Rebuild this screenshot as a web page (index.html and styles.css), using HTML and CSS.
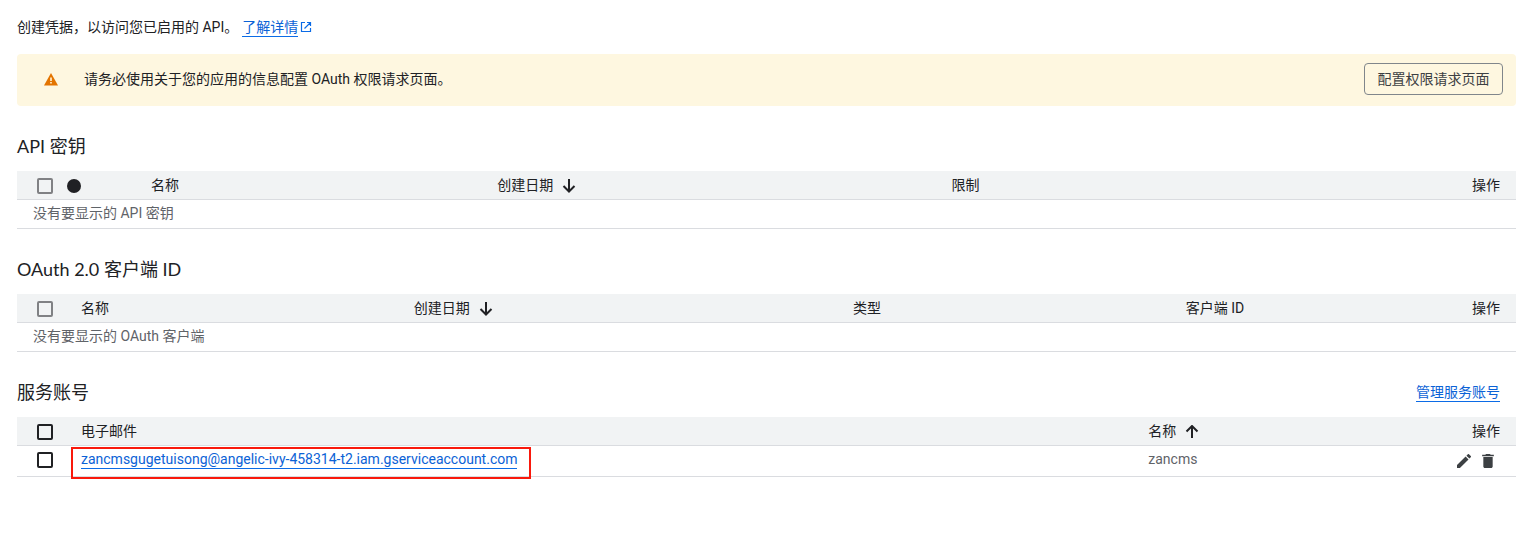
FILE: index.html
```html
<!DOCTYPE html>
<html lang="zh-CN">
<head>
    <meta charset="UTF-8">
    <meta name="viewport" content="width=device-width, initial-scale=1.0">
    <title>凭据</title>
    <link rel="stylesheet" href="styles.css">
</head>
<body>
  <main>
    <p class="intro">创建凭据，以访问您已启用的 API。
      <a class="link" href="#">了解详情</a><svg class="external" viewBox="0 0 12 12" width="12" height="12"><path d="M5 1.500H1.500v9h9V7M7 1.500h3.500V5M10.500 1.500L4.500 7.500" fill="none" stroke="currentColor" stroke-width="1.200"/></svg>
    </p>

    <div class="alert">
      <svg class="warning" viewBox="0 0 14 13" width="14" height="13"><path d="M7 0L14 12.500H0z" fill="#e37400"/><path d="M6 4.500h2v3.500H6zM6 9h2v1.500H6z" fill="#fbdcae"/></svg>
      <p class="alert-text">请务必使用关于您的应用的信息配置 OAuth 权限请求页面。</p>
      <button class="alert-btn" type="button">配置权限请求页面</button>
    </div>

    <section>
      <div class="section-head">
        <h2>API 密钥</h2>
      </div>
      <table>
        <colgroup>
          <col class="col-check">
          <col class="col-status">
          <col class="col-key-name">
          <col class="col-key-date">
          <col>
          <col class="col-actions">
        </colgroup>
        <thead>
          <tr>
            <th class="check"><input type="checkbox" aria-label="选择所有 API 密钥" disabled></th>
            <th class="status"><span class="dot"></span></th>
            <th>名称</th>
            <th><span class="sort">创建日期 <svg viewBox="0 0 14 14" width="14" height="14"><path d="M7 0v12M1.500 7L7 12.500 12.500 7" fill="none" stroke="currentColor" stroke-width="2"/></svg></span></th>
            <th>限制</th>
            <th class="actions">操作</th>
          </tr>
        </thead>
        <tbody>
          <tr>
            <td colspan="6">没有要显示的 API 密钥</td>
          </tr>
        </tbody>
      </table>
    </section>

    <section>
      <div class="section-head">
        <h2>OAuth 2.0 客户端 ID</h2>
      </div>
      <table>
        <colgroup>
          <col class="col-check">
          <col class="col-client">
          <col class="col-client-date">
          <col class="col-client">
          <col>
          <col class="col-actions">
        </colgroup>
        <thead>
          <tr>
            <th class="check"><input type="checkbox" aria-label="选择所有客户端" disabled></th>
            <th>名称</th>
            <th><span class="sort">创建日期 <svg viewBox="0 0 14 14" width="14" height="14"><path d="M7 0v12M1.500 7L7 12.500 12.500 7" fill="none" stroke="currentColor" stroke-width="2"/></svg></span></th>
            <th>类型</th>
            <th>客户端 ID</th>
            <th class="actions">操作</th>
          </tr>
        </thead>
        <tbody>
          <tr>
            <td colspan="6">没有要显示的 OAuth 客户端</td>
          </tr>
        </tbody>
      </table>
    </section>

    <section>
      <div class="section-head">
        <h2>服务账号</h2>
        <a class="link" href="#">管理服务账号</a>
      </div>
      <table>
        <colgroup>
          <col class="col-check">
          <col class="col-email">
          <col>
          <col class="col-actions">
        </colgroup>
        <thead>
          <tr>
            <th class="check"><input type="checkbox" aria-label="选择所有服务账号"></th>
            <th>电子邮件</th>
            <th><span class="sort">名称 <svg viewBox="0 0 14 14" width="14" height="14"><path d="M7 13V1.500M1.500 6.500L7 1l5.500 5.500" fill="none" stroke="currentColor" stroke-width="2"/></svg></span></th>
            <th class="actions">操作</th>
          </tr>
        </thead>
        <tbody>
          <tr class="account">
            <td class="check"><input type="checkbox" aria-label="选择 zancms"></td>
            <td><span class="marked"><a class="link" href="#">zancmsgugetuisong@angelic-ivy-458314-t2.iam.gserviceaccount.com</a></span></td>
            <td>zancms</td>
            <td class="actions">
              <div class="tools">
                <button type="button" aria-label="修改"><svg viewBox="3 3 18 18" width="14" height="14"><path d="M3 17.250V21h3.750L17.810 9.940l-3.750-3.750zM20.710 7.040a1 1 0 0 0 0-1.410l-2.340-2.340a1 1 0 0 0-1.410 0l-1.830 1.830 3.750 3.750z"/></svg></button>
                <button type="button" aria-label="删除"><svg viewBox="3 3 18 18" width="14" height="14"><path d="M6 19c0 1.100.9 2 2 2h8c1.100 0 2-.9 2-2V7H6zM19.500 4h-4l-1-1h-5l-1 1h-4v2h15z"/></svg></button>
              </div>
            </td>
          </tr>
        </tbody>
      </table>
    </section>
  </main>
</body>
</html>
```
FILE: styles.css
```css
*{
    margin: 0;
    padding: 0;
    box-sizing: border-box;
}
body{
    background-color: #fff;
    color: #202124;
    font-family: Roboto, "Noto Sans CJK SC", sans-serif;
    font-size: 14px;
    line-height: 20px;
}
main{
    padding: 17px 12px 17px 17px;
}
.link{
    display: inline-block;
    line-height: 18px;
    color: #0b62d6;
    text-decoration: none;
    border-bottom: 1px solid #0b6be6;
}
.intro{
    display: flex;
    align-items: center;
    height: 20px;
}
.intro .link{
    margin-left: 4px;
}
.external{
    margin-left: 2px;
    color: #0b6be6;
}
.alert{
    display: flex;
    align-items: center;
    margin-top: 17px;
    padding: 9px 13px 11px 27px;
    background-color: #fef7e0;
    border-radius: 4px;
}
.alert-text{
    flex: 1;
    margin-left: 26px;
}
.alert-btn{
    min-width: 139px;
    height: 32px;
    padding: 0 12px;
    font: inherit;
    color: #3c4043;
    background: none;
    border: 1px solid #80868b;
    border-radius: 4px;
}
section{
    margin-top: 28px;
}
.section-head{
    display: flex;
    justify-content: space-between;
    align-items: center;
    height: 24px;
    margin-bottom: 13px;
    padding-right: 16px;
}
.alert + section{
    margin-top: 28px;
}
h2{
    font-family: Lato, "Noto Sans CJK SC", sans-serif;
    font-size: 18px;
    font-weight: 400;
    line-height: 24px;
}
table{
    width: 100%;
    table-layout: fixed;
    border-collapse: separate;
    border-spacing: 0;
}
.col-check{
    width: 48px;
}
.col-status{
    width: 70px;
}
.col-key-name{
    width: 23.1%;
}
.col-key-date{
    width: 30.3%;
}
.col-client{
    width: 22.2%;
}
.col-client-date{
    width: 29.3%;
}
.col-email{
    width: 71.2%;
}
.col-actions{
    width: 76px;
}
th,
td{
    height: 29px;
    padding: 0 16px;
    line-height: 20px;
    text-align: left;
    vertical-align: middle;
    border-bottom: 1px solid #dadce0;
}
th{
    font-weight: 400;
    background-color: #f1f3f4;
}
td{
    padding-top: 3px;
    color: #5f6368;
    vertical-align: top;
}
.account td{
    height: 31px;
}
th.check,
td.check{
    padding-left: 20px;
    padding-right: 0;
}
.status{
    padding: 0 0 0 2px;
}
th.actions,
td.actions{
    text-align: right;
}
input[type="checkbox"]{
    appearance: none;
    display: block;
    width: 16px;
    height: 16px;
    margin-top: 2px;
    border: 2px solid #202124;
    border-radius: 2px;
}
input[type="checkbox"]:disabled{
    border-color: #808184;
}
td input[type="checkbox"]{
    margin-top: 3px;
}
.dot{
    display: block;
    width: 14px;
    height: 14px;
    margin-top: 2px;
    border-radius: 50%;
    background-color: #202124;
}
.sort{
    display: flex;
    align-items: center;
    gap: 9px;
}
.sort svg{
    margin-top: 2px;
}
.marked{
    position: relative;
    display: inline-block;
    padding-top: 1px;
    vertical-align: top;
}
.marked .link{
    display: block;
}
/* red frame drawn over the row */
.marked::after{
    content: "";
    position: absolute;
    inset: -2px -14px -10px -10px;
    border: 2px solid #f9190c;
    pointer-events: none;
}
.tools{
    display: flex;
    justify-content: flex-end;
    gap: 10px;
    padding-right: 5px;
}
.tools button{
    display: block;
    height: 14px;
    margin-top: 5px;
    border: none;
    background: none;
}
.tools svg{
    display: block;
    fill: #3c4043;
}
```
